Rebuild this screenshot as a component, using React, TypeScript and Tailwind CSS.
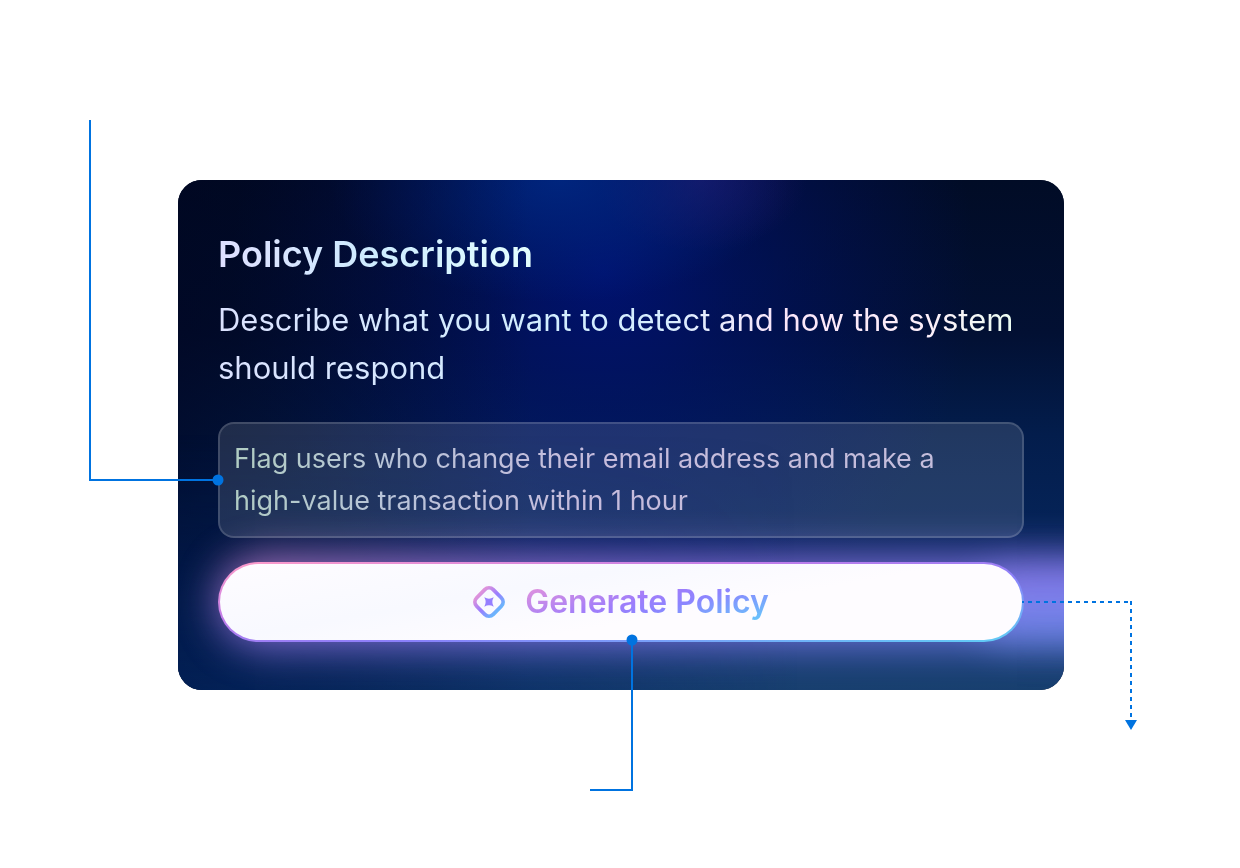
import React, { useState } from 'react';

const LINE = '#0073e0';

function PolicyIcon() {
  return (
    <svg className="h-8 w-8 shrink-0" viewBox="0 0 32 32" fill="none" aria-hidden="true">
      <defs>
        <linearGradient id="policy-diamond" gradientUnits="userSpaceOnUse" x1="4" y1="16" x2="28" y2="16">
          <stop offset="0" stopColor="#dd92dc" />
          <stop offset="0.5" stopColor="#9a7dff" />
          <stop offset="1" stopColor="#6cb4fc" />
        </linearGradient>
      </defs>
      <rect
        x="4.3"
        y="4.3"
        width="23.4"
        height="23.4"
        rx="6"
        stroke="url(#policy-diamond)"
        strokeWidth="3.8"
        transform="rotate(45 16 16)"
      />
      <path
        d="M11.3 11.3Q16 14 20.7 11.3Q18 16 20.7 20.7Q16 18 11.3 20.7Q14 16 11.3 11.3Z"
        fill="#967fff"
      />
      <rect x="13" y="13" width="6" height="6" rx="0.5" fill="#967fff" />
    </svg>
  );
}

/* Callout line that ends on the left edge of the description field */
function FieldConnector() {
  return (
    <svg
      className="pointer-events-none absolute -left-[131px] -top-[304px]"
      width="136"
      height="368"
      fill="none"
      aria-hidden="true"
    >
      <path d="M1 0V360H129" stroke={LINE} strokeWidth="2" />
      <circle cx="129" cy="360" r="5.5" fill={LINE} />
    </svg>
  );
}

/* Callout line that hangs from the bottom of the button */
function ButtonConnector() {
  return (
    <svg
      className="pointer-events-none absolute left-1/2 top-full -ml-8 -mt-2"
      width="50"
      height="158"
      fill="none"
      aria-hidden="true"
    >
      <path d="M43 6V156H1" stroke={LINE} strokeWidth="2" />
      <circle cx="43" cy="6" r="5.5" fill={LINE} />
    </svg>
  );
}

/* Dashed arrow that leaves the button to the right */
function OutputConnector() {
  return (
    <svg
      className="pointer-events-none absolute left-full top-1/2 -ml-0.5 -mt-px"
      width="116"
      height="130"
      fill="none"
      aria-hidden="true"
    >
      <path d="M0 1H110" stroke={LINE} strokeWidth="2" strokeDasharray="4 4" strokeDashoffset="2" />
      <path d="M109 0V118" stroke={LINE} strokeWidth="2" strokeDasharray="4 4" />
      <path d="M103 119H115L109 129Z" fill={LINE} />
    </svg>
  );
}

function CardBackdrop() {
  return (
    <div className="pointer-events-none absolute inset-0 overflow-hidden rounded-3xl bg-[#020b26]">
      <div className="absolute inset-0 bg-[linear-gradient(180deg,#010c26_0%,#021033_30%,#031d4c_50%,#06265c_75%,#173f6e_100%)]" />
      <div className="absolute inset-0 bg-[radial-gradient(ellipse_42%_75%_at_48%_18%,rgba(0,18,118,0.9)_0%,rgba(0,18,110,0.6)_35%,rgba(0,18,100,0)_100%)]" />
      <div className="absolute inset-0 bg-[radial-gradient(ellipse_12%_14%_at_59%_0%,rgba(38,22,105,0.65),rgba(38,22,105,0))]" />
      <div className="absolute inset-0 bg-[radial-gradient(ellipse_26%_24%_at_43%_0%,rgba(0,42,135,0.8),rgba(0,36,130,0))]" />
      <div className="absolute inset-0 bg-[linear-gradient(90deg,rgba(0,5,32,0.65)_0%,rgba(0,5,32,0)_40%)]" />
      <div className="absolute inset-x-0 bottom-0 h-1/2 bg-[linear-gradient(90deg,rgba(0,34,96,0.7),rgba(0,34,96,0.4)_40%,rgba(0,34,96,0)_70%)] mask-t-from-0%" />
      <div className="absolute -right-24 bottom-11 left-10 h-22 rounded-full bg-[linear-gradient(174deg,#e58bc8_0%,#a37bea_30%,#8b80fa_65%,#6a90f0_100%)] opacity-85 blur-[22px]" />
      <div className="absolute -right-14 bottom-12 h-18 w-36 rounded-full bg-linear-to-b from-[#9480f5] to-[#7094f4] opacity-55 blur-[20px]" />
    </div>
  );
}

export default function App() {
  const [description, setDescription] = useState(
    'Flag users who change their email address and make a high-value transaction within 1 hour'
  );

  return (
    <main className="min-h-screen overflow-hidden bg-white pt-45 pr-44 pb-44 pl-[178px] font-['Inter',sans-serif]">
      <section className="relative rounded-3xl px-10 py-12">
        <CardBackdrop />

        <div className="relative">
          <h1 className="w-fit bg-linear-to-r from-[#dfe0ff] via-[#cdebff] to-[#e4ffff] bg-clip-text text-4xl leading-[52px] font-semibold text-transparent">
            Policy Description
          </h1>
          <label
            htmlFor="policy-description"
            className="mt-4 block bg-[linear-gradient(90deg,#dbe2ff_0%,#d2edff_40%,#d6eeff_55%,#fbe6fa_70%,#fdeffa_88%,#e9fff0_100%)] bg-clip-text text-[31px] leading-12 text-transparent"
          >
            Describe what you want to detect and how the system should respond
          </label>

          <div className="relative mt-[30px] rounded-2xl border-2 border-white/15 bg-white/12 p-3.5">
            <textarea
              id="policy-description"
              rows={2}
              value={description}
              onChange={(e) => setDescription(e.target.value)}
              className="block w-full resize-none overflow-hidden bg-[linear-gradient(100deg,#b0cdc2_0%,#b8c4d8_20%,#c6bcdd_45%,#c4bedb_100%)] bg-clip-text text-[27px] leading-[42px] text-transparent outline-none"
            />
            <FieldConnector />
          </div>

          <div className="relative mt-6">
            <button
              type="button"
              className="flex h-20 w-full cursor-pointer items-center justify-center gap-5 rounded-full border-2 border-transparent [background:linear-gradient(170deg,#fefcff,#f8f9ff_35%,#fefcff_60%)_padding-box,linear-gradient(174deg,#ff9cc8_0%,#c07cea_35%,#8a80fa_60%,#5fd0f5_100%)_border-box]"
            >
              <PolicyIcon />
              <span className="bg-[linear-gradient(165deg,#e293dc_5%,#9f7dfb_45%,#8c84ff_60%,#68c4fb_95%)] bg-clip-text text-[32px] leading-10 font-semibold text-transparent">
                Generate Policy
              </span>
            </button>
            <ButtonConnector />
            <OutputConnector />
          </div>
        </div>
      </section>
    </main>
  );
}
